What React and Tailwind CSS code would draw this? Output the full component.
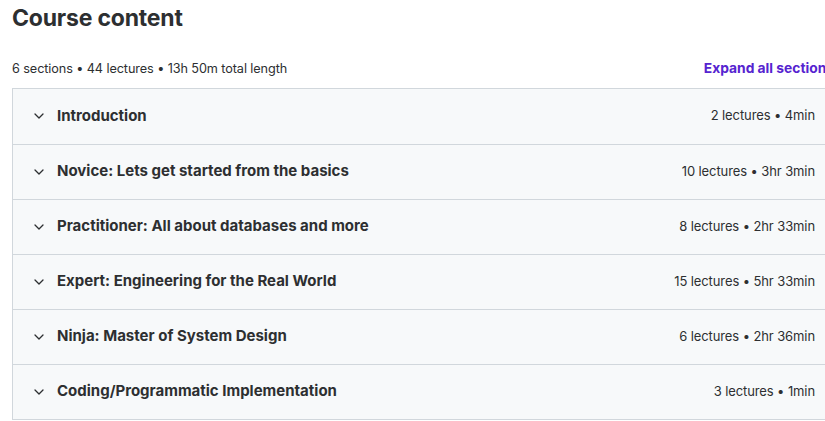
import React from "react";

const sections = [
  { title: "Introduction", meta: "2 lectures • 4min" },
  { title: "Novice: Lets get started from the basics", meta: "10 lectures • 3hr 3min" },
  { title: "Practitioner: All about databases and more", meta: "8 lectures • 2hr 33min" },
  { title: "Expert: Engineering for the Real World", meta: "15 lectures • 5hr 33min" },
  { title: "Ninja: Master of System Design", meta: "6 lectures • 2hr 36min" },
  { title: "Coding/Programmatic Implementation", meta: "3 lectures • 1min" },
];

function Chevron() {
  return (
    <svg width="10" height="6" viewBox="0 0 10 6" className="shrink-0">
      <path d="M1 1l4 4 4-4" fill="none" stroke="#2d2f31" strokeWidth="1.3" strokeLinecap="round" strokeLinejoin="round" />
    </svg>
  );
}

export default function App() {
  return (
    <div className="w-[825px] h-[421px] overflow-hidden bg-white" style={{ fontFamily: "Inter, 'Noto Sans', sans-serif" }}>
      <div className="w-[845px] pl-3 pt-[3px]">
        <h2 className="text-[23px] leading-[30px] font-bold text-[#2d2f31] tracking-[-0.2px]">Course content</h2>

        {/* stats row */}
        <div className="flex items-center justify-between mt-[25px] mb-[9px] pr-[11px]">
          <span className="text-[12.7px] text-[#2d2f31] tracking-[-0.1px]">6 sections • 44 lectures • 13h 50m total length</span>
          <button className="text-[13.8px] font-bold text-[#5624d0] whitespace-nowrap">Expand all sections</button>
        </div>

        {/* section list */}
        <div className="border border-[#d1d7dc] bg-[#f7f9fa] mr-[15px]">
          {sections.map((s, i) => (
            <div
              key={s.title}
              className={`flex items-center justify-between h-[55px] pl-[21px] pr-[14px] ${i > 0 ? "border-t border-[#d1d7dc]" : ""}`}
            >
              <div className="flex items-center gap-[13px]">
                <Chevron />
                <span className="text-[15px] font-bold text-[#2d2f31]">{s.title}</span>
              </div>
              <span className="text-[13px] text-[#2d2f31] tracking-[-0.1px]">{s.meta}</span>
            </div>
          ))}
        </div>
      </div>
    </div>
  );
}
